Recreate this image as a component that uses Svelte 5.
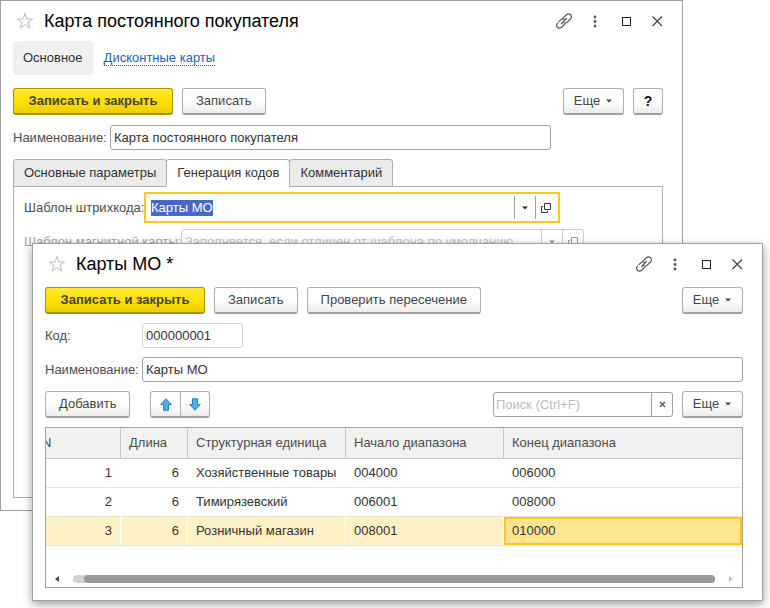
<script>
  import { onMount } from 'svelte';

  let template;
  const rows = [
    { n: 1, length: 6, unit: 'Хозяйственные товары', from: '004000', to: '006000' },
    { n: 2, length: 6, unit: 'Тимирязевский', from: '006001', to: '008000' },
    { n: 3, length: 6, unit: 'Розничный магазин', from: '008001', to: '010000' }
  ];
  const selected = 3;

  onMount(() => {
    template.focus();
    template.select();
  });
</script>

{#snippet titleBar(text)}
  <header class="title">
    <button class="icon star" aria-label="В избранное">
      <svg width="18" height="18" viewBox="0 0 18 18"><path d="M9 1.5 L10.9 7 H16.6 L12 10.4 L13.8 16 L9 12.6 L4.2 16 L6 10.4 L1.4 7 H7.1 Z" fill="none" stroke="#b3bac4" /></svg>
    </button>
    <h1>{text}</h1>
    <button class="icon" aria-label="Получить ссылку">
      <svg width="18" height="18" viewBox="0 0 18 18" fill="none" stroke="#555" stroke-width="1.2" stroke-linecap="round">
        <path d="M8 6.2 L11.4 2.8 Q13.6 1 15.6 2.7 Q17.3 4.8 15.4 7 L12 10.4 Q10.600 11.600 8.800 10.800" />
        <path d="M10 11.800 L6.600 15.200 Q4.400 17 2.400 15.300 Q.7 13.200 2.600 11 L6 7.600 Q7.400 6.400 9.200 7.200" stroke-dasharray="14 2" />
        <path d="M6.500 11.500 L11.500 6.500" />
      </svg>
    </button>
    <button class="icon" aria-label="Меню окна">
      <svg width="18" height="18" viewBox="0 0 18 18" fill="#555"><circle cx="9" cy="5" r="1.400" /><circle cx="9" cy="9.500" r="1.400" /><circle cx="9" cy="14" r="1.400" /></svg>
    </button>
    <button class="icon" aria-label="Развернуть">
      <svg width="18" height="18" viewBox="0 0 18 18"><rect x="5.500" y="5.500" width="8" height="8" fill="none" stroke="#222" /></svg>
    </button>
    <button class="icon" aria-label="Закрыть">
      <svg width="18" height="18" viewBox="0 0 18 18"><path d="M4.500 4.500 L14 14 M14 4.500 L4.500 14" stroke="#444" stroke-width="1.200" /></svg>
    </button>
  </header>
{/snippet}

{#snippet caret()}
  <svg width="6" height="4" viewBox="0 0 6 4"><path d="M0 .5 H6 L3 3.500 Z" fill="currentColor" /></svg>
{/snippet}

{#snippet openIcon()}
  <svg width="10" height="10" viewBox="0 0 10 10" fill="none" stroke="currentColor"><path d="M3.500 .5 H9.500 V6.500 H3.500 Z M2 3.500 H.5 V9.500 H6.500 V8" /></svg>
{/snippet}

<main>
  <section class="window back">
    {@render titleBar('Карта постоянного покупателя')}
    <nav>
      <a class="current" href="#main">Основное</a>
      <a class="link" href="#cards"><span>Дисконтные карты</span></a>
    </nav>
    <div class="bar">
      <button class="btn primary">Записать и закрыть</button>
      <button class="btn">Записать</button>
      <button class="btn more push">Еще {@render caret()}</button>
      <button class="btn help">?</button>
    </div>
    <div class="field name">
      <label for="card-name">Наименование:</label>
      <input id="card-name" value="Карта постоянного покупателя" />
    </div>
    <div class="tabs" role="tablist">
      <button role="tab" aria-selected="false">Основные параметры</button>
      <button role="tab" aria-selected="true" class="active">Генерация кодов</button>
      <button role="tab" aria-selected="false">Комментарий</button>
    </div>
    <div class="panel" role="tabpanel">
      <div class="field">
        <label for="barcode">Шаблон штрихкода:</label>
        <div class="combo focused">
          <input id="barcode" bind:this={template} value="Карты МО" />
          <button aria-label="Выбрать">{@render caret()}</button>
          <button aria-label="Открыть">{@render openIcon()}</button>
        </div>
      </div>
      <div class="field dim">
        <label for="magnetic">Шаблон магнитной карты:</label>
        <div class="combo">
          <input id="magnetic" placeholder="Заполняется, если отличен от шаблона по умолчанию" />
          <button aria-label="Выбрать">{@render caret()}</button>
          <button aria-label="Открыть">{@render openIcon()}</button>
        </div>
      </div>
    </div>
  </section>

  <section class="window front">
    {@render titleBar('Карты МО *')}
    <div class="bar">
      <button class="btn primary">Записать и закрыть</button>
      <button class="btn">Записать</button>
      <button class="btn">Проверить пересечение</button>
      <button class="btn more push">Еще {@render caret()}</button>
    </div>
    <div class="field">
      <label for="code">Код:</label>
      <input id="code" class="code" value="000000001" readonly />
    </div>
    <div class="field">
      <label for="tpl-name">Наименование:</label>
      <input id="tpl-name" value="Карты МО" />
    </div>
    <div class="bar">
      <button class="btn">Добавить</button>
      <div class="pair">
        <button class="btn" aria-label="Переместить вверх">
          <svg width="12" height="13" viewBox="0 0 12 13"><path d="M6 .7 L11.300 6.500 H8.500 V12.300 H3.500 V6.500 H.7 Z" fill="#45b0ea" stroke="#2d7fb5" /></svg>
        </button>
        <button class="btn" aria-label="Переместить вниз">
          <svg width="12" height="13" viewBox="0 0 12 13"><path d="M6 12.300 L11.300 6.500 H8.500 V.7 H3.500 V6.500 H.7 Z" fill="#45b0ea" stroke="#2d7fb5" /></svg>
        </button>
      </div>
      <div class="search push">
        <input type="text" aria-label="Поиск" placeholder="Поиск (Ctrl+F)" />
        <button aria-label="Очистить">
          <svg width="7" height="7" viewBox="0 0 7 7"><path d="M1 1 L6 6 M6 1 L1 6" stroke="#555" stroke-width="1.300" /></svg>
        </button>
      </div>
      <button class="btn more">Еще {@render caret()}</button>
    </div>
    <div class="grid">
      <table>
        <colgroup><col class="c-n" /><col class="c-len" /><col class="c-range" /><col class="c-range" /><col /></colgroup>
        <thead>
          <tr><th class="clipped">N</th><th>Длина</th><th>Структурная единица</th><th>Начало диапазона</th><th>Конец диапазона</th></tr>
        </thead>
        <tbody>
          {#each rows as row (row.n)}
            <tr class:selected={row.n === selected}>
              <td class="num wide">{row.n}</td>
              <td class="num">{row.length}</td>
              <td>{row.unit}</td>
              <td>{row.from}</td>
              <td>{row.to}</td>
            </tr>
          {/each}
        </tbody>
      </table>
      <div class="scroll">
        <svg width="4" height="6" viewBox="0 0 4 6"><path d="M4 0 V6 L0 3 Z" fill="#444" /></svg>
        <div class="track"><div class="thumb"></div></div>
        <svg width="4" height="6" viewBox="0 0 4 6"><path d="M0 0 V6 L4 3 Z" fill="#bbb" /></svg>
      </div>
    </div>
  </section>
</main>

<style>
  :global(body) { margin: 0; background: #fff; }
  main {
    position: relative;
    min-height: 100vh;
    overflow: hidden;
    font: 13px/16px "Liberation Sans", Arial, sans-serif;
    color: #333;
  }
  main, main * { box-sizing: border-box; }
  button, input { font: inherit; color: inherit; margin: 0; }
  button { padding: 0; border: 0; background: none; }
  svg { display: block; flex: none; }

  .window { border: 1px solid #a0a0a0; background: #fff; padding: 0 19px 12px 12px; }
  .back { margin-right: 87px; }
  .front {
    position: absolute;
    top: 243px;
    left: 32px;
    right: 7px;
    box-shadow: 0 3px 9px rgba(0, 0, 0, 0.4);
  }

  .title { display: flex; align-items: center; height: 40px; margin-right: -9px; }
  h1 { flex: 1; margin: 0; font-size: 18px; line-height: 22px; font-weight: 400; color: #000; }
  .icon { width: 31px; display: flex; justify-content: center; }
  .star { width: 31px; padding-left: 3px; justify-content: flex-start; }

  nav { display: flex; align-items: center; gap: 11px; }
  nav a { text-decoration: none; color: #333; }
  .current { padding: 9px 10px; background: #f0f0f0; border-radius: 4px; }
  .link { color: #2a5db8; }
  .link span { border-bottom: 1px dotted #2a5db8; }

  .bar { display: flex; gap: 9px; }
  .back .bar { margin: 13px 0 10px; }
  .front .bar { margin: 3px 0 9px; }
  .btn {
    height: 27px;
    padding: 0 13px;
    border: 1px solid #b0b0b0;
    border-bottom: 2px solid #a0a0a0;
    border-radius: 3px;
    background: linear-gradient(#fff 50%, #ececec);
    color: #444;
    white-space: nowrap;
  }
  .primary {
    min-width: 160px;
    border-color: #a89400;
    background: linear-gradient(#ffe838, #ffe000 50%, #ecce00);
    font-weight: 700;
  }
  .push { margin-left: auto; }
  .more { width: 61px; padding-left: 12px; display: flex; align-items: center; justify-content: center; gap: 6px; }
  .help { width: 30px; padding: 0; font-weight: 700; font-size: 14px; color: #111; }

  .field { display: flex; align-items: center; }
  .field label { flex: none; width: 97px; color: #4d4d4d; white-space: nowrap; }
  .field > input, .search, .combo { height: 25px; border: 1px solid #a0a0a0; border-radius: 3px; background: #fff; }
  .field > input { flex: 1; min-width: 0; padding: 0 3px; }
  input { outline: 0; }
  input::placeholder { color: #bbb; opacity: 1; }
  .name { margin-right: 112px; margin-bottom: 9px; }

  .tabs { display: flex; position: relative; margin-bottom: -1px; }
  .tabs button {
    height: 28px;
    padding: 0 10px;
    border: 1px solid #b0b0b0;
    border-radius: 3px 3px 0 0;
    background: #ebebeb;
  }
  .tabs button + button { margin-left: -1px; }
  .tabs .active { background: #fff; border-bottom-color: #fff; }
  .panel { min-height: 312px; padding: 5px 10px; border: 1px solid #b0b0b0; }
  .panel label { width: 120px; }
  .combo { display: flex; width: 403px; }
  .combo input { flex: 1; min-width: 0; border: 0; padding: 0 3px; background: none; }
  .combo button { width: 21px; display: flex; align-items: center; justify-content: center; border-left: 1px solid #a0a0a0; }
  .focused { width: 416px; height: 31px; padding: 2px; border: 2px solid #fcc917; border-radius: 0; }
  .focused input::selection { background: #4b67c5; color: #fff; }
  .dim { margin-top: 6px; opacity: 0.5; }
  .dim label { width: 157px; }
  .dim .combo input::placeholder { color: #888; }

  .front .field { margin-bottom: 9px; }
  .field > .code { flex: none; width: 101px; border-color: #d4d4d4; }
  .pair { display: flex; margin-left: 11px; }
  .pair .btn { width: 31px; padding: 0; display: flex; align-items: center; justify-content: center; }
  .pair .btn:first-child { border-radius: 3px 0 0 3px; }
  .pair .btn:last-child { width: 30px; margin-left: -1px; border-radius: 0 3px 3px 0; }
  .search { display: flex; width: 180px; margin-top: 1px; }
  .search input { flex: 1; min-width: 0; padding: 0 2px; border: 0; background: none; }
  .search button { width: 21px; display: flex; align-items: center; justify-content: center; border-left: 1px solid #a0a0a0; }

  .grid { border: 1px solid #a0a0a0; }
  table { width: 100%; table-layout: fixed; border-collapse: separate; border-spacing: 0; }
  .c-n { width: 75px; }
  .c-len { width: 67px; }
  .c-range { width: 158px; }
  th, td { padding: 0 8px; text-align: left; font-weight: 400; white-space: nowrap; overflow: hidden; }
  th { height: 31px; background: #f1f1f1; border-right: 1px solid #c8c8c8; border-bottom: 1px solid #c8c8c8; color: #4d4d4d; }
  th:last-child { border-right: 0; }
  .clipped { padding: 0; text-indent: -4px; }
  td { height: 29px; border-bottom: 1px solid #e4e4e4; border-right: 1px solid #fff; }
  td:last-child { border-right: 0; }
  .num { text-align: right; }
  .selected td { background: #fef1c5; }
  .selected td:last-child { background: #fee591; box-shadow: inset 0 0 0 2px #fcc917; }
  .scroll { display: flex; align-items: center; gap: 14px; height: 16px; margin-top: 25px; padding: 0 9px; }
  .track { flex: 1; height: 8px; padding-left: 11px; border-radius: 4px; background: #d4d4d4; }
  .thumb { height: 8px; border-radius: 4px; background: #9a9a9a; }
</style>
